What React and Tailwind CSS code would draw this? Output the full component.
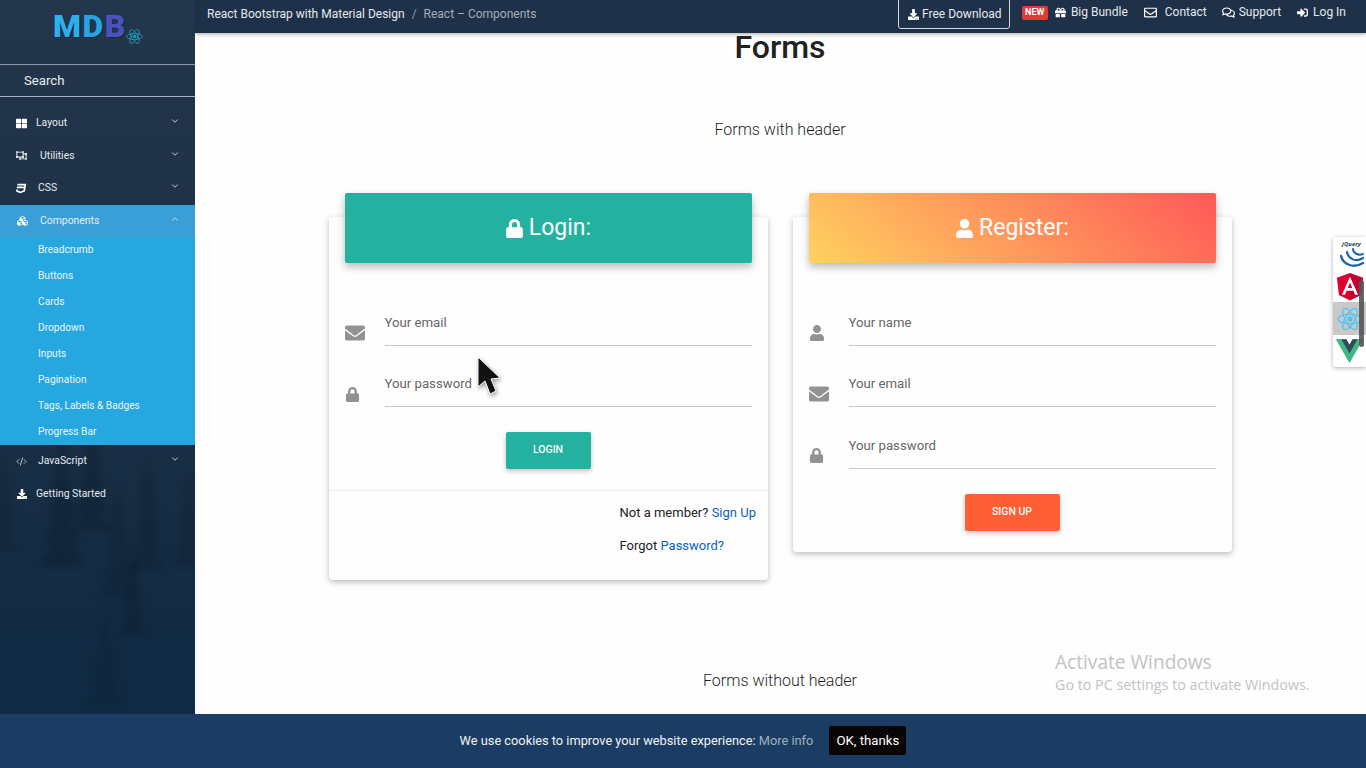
import React from "react";
import {
  FaThLarge, FaRegObjectUngroup, FaCss3, FaCubes, FaDownload, FaGift,
  FaRegEnvelope, FaRegComments, FaSignInAlt, FaLock, FaUser, FaEnvelope,
} from "react-icons/fa";
import { ChevronDown, ChevronUp, CodeXml } from "lucide-react";

function ReactLogo({ className, color = "#29a8df" }) {
  return (
    <svg viewBox="0 0 24 24" className={className} fill="none" stroke={color} strokeWidth="1.1">
      <ellipse cx="12" cy="12" rx="11" ry="4.4" />
      <ellipse cx="12" cy="12" rx="11" ry="4.4" transform="rotate(60 12 12)" />
      <ellipse cx="12" cy="12" rx="11" ry="4.4" transform="rotate(120 12 12)" />
      <circle cx="12" cy="12" r="2" fill={color} />
    </svg>
  );
}

function NavItem({ icon, label, gap = "ml-[9px]", open, noChevron }) {
  return (
    <div className={`flex h-[32.5px] items-center pl-4 pr-[15px] text-[10.4px] text-[#e6ebf0] ${open ? "bg-[#3a9fd6]" : ""}`}>
      <span className="flex w-[11px] items-center justify-center overflow-visible text-white">{icon}</span>
      <span className={gap}>{label}</span>
      {!noChevron && (
        <span className="ml-auto -translate-y-[2px] text-[#dfe6ec]">
          {open ? <ChevronUp size={10} strokeWidth={2} /> : <ChevronDown size={10} strokeWidth={2} />}
        </span>
      )}
    </div>
  );
}

function Field({ icon, label }) {
  return (
    <div className="flex h-[61.5px] items-end">
      <div className="flex h-[26px] w-[40px] shrink-0 items-center text-[#929292]">{icon}</div>
      <div className="flex-1 border-b border-[#c9c9c9] pb-[12px] text-[13.2px] leading-[20px] text-[#666]">
        {label}
      </div>
    </div>
  );
}

function Pine({ x, y, h, o = 0.35 }) {
  const w = h * 0.36;
  const tiers = [0, 0.18, 0.36, 0.54, 0.72];
  return (
    <g fill="#0b1826" opacity={o}>
      {tiers.map((t, i) => {
        const top = y + t * h;
        const half = (w / 2) * (0.35 + t * 0.9);
        return <polygon key={i} points={`${x},${top} ${x + half},${top + h * 0.3} ${x - half},${top + h * 0.3}`} />;
      })}
    </g>
  );
}

function Sidebar() {
  return (
    <aside className="relative flex h-[714px] w-[195px] shrink-0 flex-col overflow-hidden bg-gradient-to-b from-[#24364c] via-[#1b2f44] to-[#0f2a44] font-['Roboto',sans-serif]">
      <svg className="absolute bottom-0 left-0 h-[280px] w-[195px] blur-[3px]" viewBox="0 0 195 280">
        <Pine x={3} y={25} h={90} o={0.2} />
        <Pine x={62} y={0} h={130} o={0.3} />
        <Pine x={92} y={-15} h={110} o={0.3} />
        <Pine x={118} y={50} h={110} o={0.22} />
        <Pine x={147} y={25} h={110} o={0.25} />
        <Pine x={188} y={40} h={90} o={0.2} />
        <Pine x={133} y={115} h={85} o={0.3} />
        <Pine x={105} y={175} h={95} o={0.18} />
      </svg>
      <div className="relative flex h-[65px] shrink-0 items-start justify-center border-b border-[#8a99a8] pl-[1px] pt-[9px]">
        <div className="relative flex h-[34px] items-center text-[32px] font-black tracking-[1.5px] leading-none [text-shadow:1px_1px_0_rgba(0,0,0,0.3)]">
          <span className="text-[#2bb0ec]">M</span>
          <span className="text-[#29a3e4]">D</span>
          <span className="text-[#4a52c0]">B</span>
          <ReactLogo className="-ml-[1px] mt-[20px] h-[17px] w-[17px]" color="#1f9ec0" />
        </div>
      </div>
      <div className="relative flex h-[32px] shrink-0 items-center border-b border-[#a7b3be] pl-6 text-[13.2px] text-[#e8edf1]">
        Search
      </div>
      <nav className="relative mt-[10px]">
        <NavItem icon={<FaThLarge size={11} />} label="Layout" />
        <NavItem icon={<FaRegObjectUngroup size={17} />} label="Utilities" gap="ml-[13px]" />
        <NavItem icon={<FaCss3 size={11} />} label="CSS" gap="ml-[11px]" />
        <NavItem icon={<FaCubes size={14} className="translate-x-[1px]" />} label="Components" gap="ml-[13px]" open />
        <div className="bg-[#27a7df] pl-[38px] text-[10.2px] text-[#e8f6fc]">
          {["Breadcrumb", "Buttons", "Cards", "Dropdown", "Inputs", "Pagination", "Tags, Labels & Badges", "Progress Bar"].map((t) => (
            <div key={t} className="flex h-[26px] items-center">{t}</div>
          ))}
        </div>
        <NavItem icon={<CodeXml size={13} strokeWidth={1.5} />} label="JavaScript" gap="ml-[11px]" />
        <NavItem icon={<FaDownload size={10} />} label="Getting Started" noChevron />
      </nav>
    </aside>
  );
}

function TopBar() {
  return (
    <header className="flex h-[33px] shrink-0 items-stretch bg-[#1f3148] pl-3 pr-5 text-[12px] text-[#e4e9ee] shadow-[0_1px_4px_rgba(0,0,0,0.35)]">
      <div className="flex items-center pb-[5px]">
        <span>React Bootstrap with Material Design</span>
        <span className="mx-[7px] text-[#8f9cab]">/</span>
        <span className="text-[#a4aeb9]">React – Components</span>
      </div>
      <div className="ml-auto flex items-center pb-[9px]">
        <div className="-mt-[1px] flex h-[30px] items-center gap-[3px] self-start rounded-b-[3px] border border-[#d3d9df] pl-[9px] pr-[7px]">
          <FaDownload size={11} className="text-white" />
          <span>Free Download</span>
        </div>
        <span className="ml-[12px] translate-y-[1px] rounded-[2px] bg-[#e53935] px-[3.5px] text-[9px] font-bold leading-[13.5px] text-white">NEW</span>
        <FaGift size={11} className="ml-[7px] text-white" />
        <span className="ml-[5px]">Big Bundle</span>
        <FaRegEnvelope size={13} className="ml-[16px] text-white" />
        <span className="ml-[8px]">Contact</span>
        <FaRegComments size={13} className="ml-[15px] text-white" />
        <span className="ml-[4px]">Support</span>
        <FaSignInAlt size={11} className="ml-[16px] text-white" />
        <span className="ml-[5px]">Log In</span>
      </div>
    </header>
  );
}

function FormCard({ title, icon, headerClass, children }) {
  return (
    <div className="relative w-[439px] rounded-[4px] bg-[#fefefe] px-4 shadow-[0_2px_5px_rgba(0,0,0,0.18),0_2px_10px_rgba(0,0,0,0.1)]">
      <div className={`-mt-[24px] flex h-[70px] w-full items-center justify-center gap-[5px] rounded-[2px] text-[23px] text-white shadow-[0_4px_8px_rgba(0,0,0,0.28)] ${headerClass}`}>
        {icon}
        <span>{title}</span>
      </div>
      {children}
    </div>
  );
}

function CTA({ label, className }) {
  return (
    <div className={`flex h-[37px] items-center justify-center rounded-[2px] text-[10.5px] font-medium uppercase text-[#f4fbfa] shadow-[0_2px_5px_rgba(0,0,0,0.25)] ${className}`}>
      {label}
    </div>
  );
}

function Main() {
  return (
    <main className="flex min-w-0 flex-1 flex-col bg-[#fefefe] font-['Roboto',sans-serif]">
      <TopBar />
      <div className="flex flex-col items-center pr-[1px]">
        <h1 className="mt-[-5px] text-[32px] font-medium leading-[38px] text-[#212121]">Forms</h1>
        <h2 className="mt-[52px] text-[16px] font-light leading-[24px] text-[#1f1f1f]">Forms with header</h2>
        <div className="mt-[75px] flex items-start gap-[25px]">
          <FormCard title="Login:" headerClass="bg-[#24b19f]" icon={<FaLock size={19} />}>
            <div className="pt-[21px]">
              <Field icon={<FaEnvelope size={20} />} label="Your email" />
              <Field icon={<FaLock size={15} />} label="Your password" />
            </div>
            <div className="mt-[24.5px] flex justify-center">
              <CTA label="Login" className="w-[85px] bg-[#24b19f]" />
            </div>
            <div className="-mx-4 mt-[21px] border-t border-[#eeeeee] pb-[24px] pl-[291px] pt-[11.5px] text-[13px] leading-[21px] text-[#212121]">
              <div>Not a member? <span className="text-[#0d5fc4]">Sign Up</span></div>
              <div className="mt-[11.5px]">Forgot <span className="text-[#0d5fc4]">Password?</span></div>
            </div>
          </FormCard>
          <FormCard
            title="Register:"
            headerClass="bg-[linear-gradient(40deg,#ffd25f,#ff5858)]"
            icon={<FaUser size={19} />}
          >
            <div className="pt-[21px]">
              <Field icon={<FaUser size={16} />} label="Your name" />
              <Field icon={<FaEnvelope size={20} />} label="Your email" />
              <Field icon={<FaLock size={15} />} label="Your password" />
            </div>
            <div className="mt-[25px] flex justify-center pb-[21px]">
              <CTA label="Sign up" className="w-[95px] bg-[#ff5f35]" />
            </div>
          </FormCard>
        </div>
        <h2 className="mt-[89px] text-[16px] font-light leading-[24px] text-[#1f1f1f]">Forms without header</h2>
      </div>
    </main>
  );
}

function SideDock() {
  return (
    <div className="absolute right-0 top-[237px] flex h-[130px] w-[33px] flex-col overflow-hidden rounded-l-[3px] bg-white shadow-[0_1px_4px_rgba(0,0,0,0.3)]">
      <div className="flex h-[33px] flex-col items-center justify-end pb-[2px] pl-[4px]">
        <span className="text-[6px] font-bold italic leading-[6px] text-[#1d3f5f]">jQuery</span>
        <svg viewBox="0 0 24 21" className="h-[21px] w-[24px]" fill="none" stroke="#1f66ac" strokeLinecap="round">
          <path d="M1 9 C3 17 13 22 23 16" strokeWidth="2.4" />
          <path d="M7 5 C8 11 15 16 23 11" strokeWidth="2.2" />
          <path d="M13 2 C13 6 18 9 23 7" strokeWidth="2" />
        </svg>
      </div>
      <div className="flex h-[32px] items-center justify-center">
        <svg viewBox="0 0 250 250" className="h-[29px] w-[28px]">
          <polygon points="125,5 8,47 26,200 125,250" fill="#dd0031" />
          <polygon points="125,5 242,47 224,200 125,250" fill="#c3002f" />
          <path d="M125 38 L53 198 H80 L94 162 H156 L170 198 H197 Z M105 138 L125 90 L145 138 Z" fill="#fff" fillRule="evenodd" />
        </svg>
      </div>
      <div className="flex h-[33px] items-center justify-center bg-[#c9c9c9]">
        <ReactLogo className="h-[26px] w-[26px]" color="#4cc5f0" />
      </div>
      <div className="flex h-[32px] items-center justify-center">
        <svg viewBox="0 0 256 221" className="h-[24px] w-[27px]">
          <path d="M204.8 0H256L128 220.8 0 0h97.9L128 51.2 157.4 0z" fill="#41b883" />
          <path d="M0 0l128 220.8L256 0h-51.2L128 132.5 50.6 0z" fill="#41b883" />
          <path d="M50.6 0L128 133.1 204.8 0h-47.4L128 51.2 97.9 0z" fill="#35495e" />
        </svg>
      </div>
      <div className="absolute right-[2px] top-[43px] h-[67px] w-[5px] rounded-[3px] bg-[#555] opacity-90" />
    </div>
  );
}

export default function App() {
  return (
    <div className="relative h-[768px] w-[1366px] overflow-hidden bg-[#fefefe]">
      <div className="flex h-[714px]">
        <Sidebar />
        <Main />
      </div>
      <div className="-mt-[1px] flex h-[55px] items-center justify-center border-t border-[#5f7d99] bg-[#1b3d63] pb-[1px] font-['Roboto',sans-serif] text-[12.8px] text-[#f0f3f6]">
        <span>We use cookies to improve your website experience: <span className="text-[#a3b0bd]">More info</span></span>
        <span className="ml-[16px] flex h-[29px] w-[77px] items-center justify-center rounded-[2px] bg-[#0a0505] text-[13.2px] text-white">OK, thanks</span>
      </div>
      <SideDock />
      <div className="absolute left-[1055px] top-[650px] font-['Open_Sans','Liberation_Sans',sans-serif] text-[#c0c3c6]">
        <div className="text-[19.1px] leading-[24px]">Activate Windows</div>
        <div className="mt-[1px] text-[14.3px] leading-[20px]">Go to PC settings to activate Windows.</div>
      </div>
      <svg className="absolute left-[476px] top-[356px] h-[44px] w-[26px]" viewBox="0 0 26 44">
        <path d="M2 1 L2 31 L9 25 L14 38 L20 35 L15 23 L24 22 Z" fill="#111" stroke="#fff" strokeWidth="1" style={{ filter: "drop-shadow(1px 2px 2px rgba(0,0,0,0.4))" }} />
      </svg>
    </div>
  );
}
